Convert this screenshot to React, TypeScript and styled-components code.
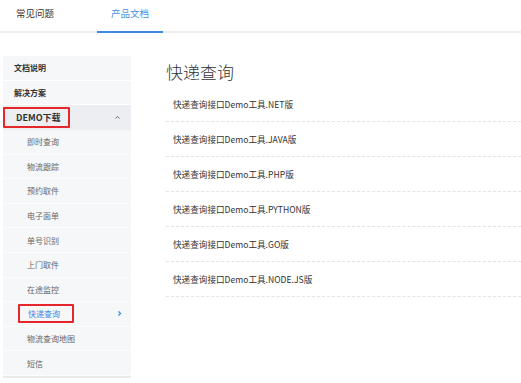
import React from "react";
import styled, { createGlobalStyle } from "styled-components";

const Global = createGlobalStyle`
  html, body { margin: 0; padding: 0; background: #fff; }
  body { font-family: "Noto Sans CJK SC", "Noto Sans", sans-serif; overflow: hidden; }
  * { box-sizing: border-box; }
`;

const Page = styled.div`
  width: 521px;
  height: 383px;
  display: flex;
  flex-direction: column;
`;

const Header = styled.div`
  height: 33px;
  display: flex;
  gap: 29px;
  padding-left: 2px;
  border-bottom: 2px solid #eeeeee;
`;

const Tab = styled.div<{ $active?: boolean }>`
  width: 66px;
  height: 33px;
  display: flex;
  align-items: center;
  justify-content: center;
  padding-bottom: 5px;
  font-size: 9.5px;
  color: ${(p) => (p.$active ? "#4a90e2" : "#333")};
  border-bottom: 2px solid ${(p) => (p.$active ? "#3d8ae5" : "transparent")};
  margin-bottom: -2px;
`;

const Body = styled.div`
  display: flex;
  padding-top: 23px;
  padding-left: 3px;
`;

const Sidebar = styled.div`
  width: 128px;
  background: #f6f7f9;
  display: flex;
  flex-direction: column;
  border-bottom: 2px solid #e9eaec;
`;

const TopRow = styled.div<{ $open?: boolean }>`
  height: ${(p) => (p.$open ? "25px" : "24.5px")};
  display: flex;
  align-items: center;
  justify-content: space-between;
  padding: 0 10px 0 ${(p) => (p.$open ? "0" : "11px")};
  font-size: ${(p) => (p.$open ? "9px" : "8px")};
  font-weight: 600;
  color: #333;
  background: ${(p) => (p.$open ? "#eceef1" : "transparent")};
  border-bottom: 1px solid ${(p) => (p.$open ? "transparent" : "#ffffff")};
`;

const Marked = styled.span`
  height: 21px;
  display: flex;
  align-items: center;
  padding: 0 7px 0 11px;
  border: 2px solid #e5262a;
  border-radius: 1px;
`;

const SubRow = styled.div<{ $active?: boolean }>`
  height: 24.6px;
  display: flex;
  align-items: center;
  justify-content: space-between;
  padding: 0 8px 0 24px;
  font-size: 8px;
  color: ${(p) => (p.$active ? "#3a86e8" : "#666")};
  border-bottom: 1px solid #fdfdfe;
`;

const SubMarked = styled.span`
  height: 19px;
  display: flex;
  align-items: center;
  margin-left: -9px;
  width: 56px;
  padding-left: 8px;
  border: 2px solid #e5262a;
  border-radius: 1px;
`;

const Main = styled.div`
  flex: 1;
  margin-left: 35px;
  display: flex;
  flex-direction: column;
`;

const Title = styled.h1`
  margin: 0;
  height: 31px;
  display: flex;
  align-items: center;
  padding-bottom: 1px;
  font-size: 17px;
  font-weight: 300;
  color: #333;
`;

const Item = styled.div`
  height: 35px;
  display: flex;
  align-items: center;
  padding-left: 7px;
  font-size: 8.6px;
  color: #333;
  border-bottom: 1px dashed #e3e3e3;
`;

const Chevron = ({ dir, color }: { dir: "up" | "right"; color: string }) => (
  <svg width="7" height="7" viewBox="0 0 10 10">
    {dir === "up" ? (
      <path d="M2 6.5 L5 3.5 L8 6.5" fill="none" stroke={color} strokeWidth="1.4" />
    ) : (
      <path d="M3.5 2 L6.5 5 L3.5 8" fill="none" stroke={color} strokeWidth="1.8" />
    )}
  </svg>
);

const subs = ["即时查询", "物流跟踪", "预约取件", "电子面单", "单号识别", "上门取件", "在途监控", "快递查询", "物流查询地图", "短信"];
const items = [".NET", ".JAVA", ".PHP", ".PYTHON", ".GO", ".NODE.JS"];

export default function App() {
  return (
    <Page>
      <Global />
      <Header>
        <Tab>常见问题</Tab>
        <Tab $active>产品文档</Tab>
      </Header>
      <Body>
        <Sidebar>
          <TopRow>文档说明</TopRow>
          <TopRow>解决方案</TopRow>
          <TopRow $open>
            <Marked>DEMO下载</Marked>
            <Chevron dir="up" color="#666" />
          </TopRow>
          {subs.map((s) =>
            s === "快递查询" ? (
              <SubRow key={s} $active>
                <SubMarked>{s}</SubMarked>
                <Chevron dir="right" color="#3a86e8" />
              </SubRow>
            ) : (
              <SubRow key={s}>{s}</SubRow>
            )
          )}
        </Sidebar>
        <Main>
          <Title>快递查询</Title>
          {items.map((i) => (
            <Item key={i}>快递查询接口Demo工具{i}版</Item>
          ))}
        </Main>
      </Body>
    </Page>
  );
}
